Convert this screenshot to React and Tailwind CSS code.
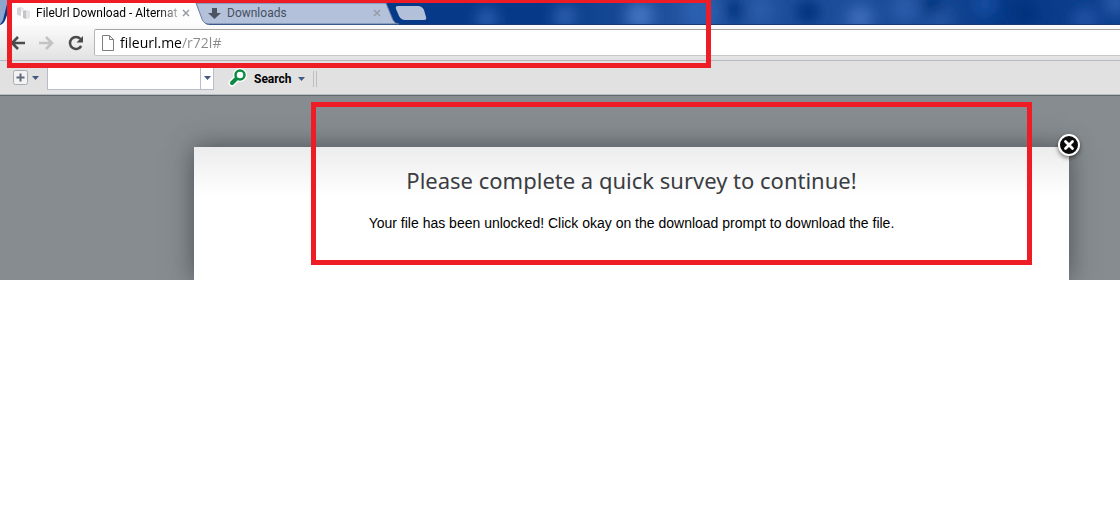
import React from "react";

function Caret({ className = "" }) {
  return (
    <svg width="7" height="4" viewBox="0 0 7 4" className={"shrink-0 " + className} aria-hidden="true">
      <path d="M0 0h7L3.500 4z" fill="#44597f" />
    </svg>
  );
}

function TabClose({ label }) {
  return (
    <button aria-label={label} className="flex size-3 shrink-0 items-center justify-center">
      <svg width="8" height="8" viewBox="0 0 8 8" aria-hidden="true">
        <path d="M1 1l6 6M7 1l-6 6" stroke="#989ca5" strokeWidth="1.500" />
      </svg>
    </button>
  );
}

function StripArt() {
  const glows = [
    [487, 19, 22, "#2a5cae"], [565, 17, 22, "#2d60b0"], [640, 16, 28, "#4273c0"],
    [700, 12, 40, "#2a5faf"], [760, 10, 28, "#2a5ca8"], [860, 18, 26, "#3c6cba"],
    [905, 8, 26, "#2c5cab"], [940, 20, 24, "#2454a2"], [985, 4, 22, "#1450a4"],
    [1085, 20, 24, "#2353a5"], [1116, 2, 24, "#2a5cab"],
  ];
  const shades = [[735, 10, 20], [808, 12, 24], [932, 4, 20], [1025, 14, 24]];
  return (
    <svg className="absolute inset-0 h-full w-full" preserveAspectRatio="none" viewBox="0 0 1120 25" aria-hidden="true">
      <defs>
        <linearGradient id="sky" x1="0" x2="1" y1="0" y2="0">
          <stop offset="0" stopColor="#06398a" />
          <stop offset="0.480" stopColor="#063a88" />
          <stop offset="0.600" stopColor="#1f519d" />
          <stop offset="0.820" stopColor="#1b4c98" />
          <stop offset="0.900" stopColor="#053786" />
          <stop offset="1" stopColor="#0f4190" />
        </linearGradient>
        <filter id="soft" filterUnits="userSpaceOnUse" x="0" y="-40" width="1160" height="110">
          <feGaussianBlur stdDeviation="7" />
        </filter>
      </defs>
      <rect width="1120" height="25" fill="url(#sky)" />
      <g filter="url(#soft)">
        {glows.map(([x, y, r, c]) => <circle key={x} cx={x} cy={y} r={r / 2} fill={c} />)}
        {shades.map(([x, y, r]) => <circle key={x} cx={x} cy={y} r={r / 2} fill="#04317b" />)}
      </g>
      <rect y="24" width="1120" height="1" fill="#1b3870" />
    </svg>
  );
}

function TabShapes() {
  return (
    <svg className="absolute top-0 left-0" width="430" height="25" viewBox="0 0 430 25" aria-hidden="true">
      <path d="M0 0H8L3 20Q1 24 0 24z" fill="#8ea6cd" />
      <path d="M196 3H386L393 20Q395 24 399 24H208Q204 24 202 20z" fill="#b3c1db" stroke="#5f789f" strokeWidth="1" />
      <path d="M0 25Q4 24 6 18L12 0H195L202 19Q204 24 209 25z" fill="#fdfdfd" />
      <path d="M196 3L202 19Q204 24 209 24.500" fill="none" stroke="#6f83a4" strokeWidth="1" />
      <path d="M398 6H418Q422 6 424 10L426 17Q427 20 424 20H405Q401 20 399 16L396 9Q395 6 398 6z" fill="#b2c0da" />
    </svg>
  );
}

function TabStrip() {
  return (
    <div className="relative h-[25px] overflow-hidden">
      <StripArt />
      <TabShapes />
      <div role="tablist" className="relative flex h-full items-center pt-px pl-4 font-[Roboto,sans-serif] text-xs">
        <div role="tab" aria-selected="true" className="flex w-[192px] items-center">
          <svg width="16" height="16" viewBox="0 0 16 16" className="mr-1 shrink-0" aria-hidden="true">
            <path d="M1 3l4-1v9l-4-1z" fill="#d5d5d8" />
            <path d="M5 2l3 1v3l-3 1z" fill="#ececee" />
            <path d="M7 6l3-1v9l-3-1z" fill="#c4c4c8" />
            <path d="M10 5l4 1v7l-4 1z" fill="#e5e5e8" />
          </svg>
          <span className="w-[144px] whitespace-nowrap bg-linear-to-r from-black from-85% to-black/20 bg-clip-text text-transparent">
            FileUrl Download - Alternat
          </span>
          <TabClose label="Close FileUrl Download" />
        </div>
        <div role="tab" aria-selected="false" className="flex w-[175px] items-center text-[#46505f]">
          <svg width="13" height="13" viewBox="0 0 13 13" className="mr-1.5 shrink-0" aria-hidden="true">
            <path d="M4 1h5v5h4L6.500 12 0 6h4z" fill="#4c5462" />
          </svg>
          <span className="grow">Downloads</span>
          <TabClose label="Close Downloads" />
        </div>
        <button aria-label="New tab" className="ml-3 h-4 w-7" />
      </div>
    </div>
  );
}

function NavBar() {
  return (
    <div className="flex h-9 items-center border-b border-[#b6b8c2] bg-linear-to-b from-[#fbfbfb] to-[#e2e2e2] pl-2.5">
      <button aria-label="Back" className="mr-3.5">
        <svg width="15" height="14" viewBox="0 0 15 14" fill="none" stroke="#4b4b4b" strokeWidth="2.600" aria-hidden="true">
          <path d="M15 7H2M8 1L2 7l6 6" />
        </svg>
      </button>
      <button aria-label="Forward" className="mr-3.5">
        <svg width="15" height="14" viewBox="0 0 15 14" fill="none" stroke="#c3c3c3" strokeWidth="2.600" aria-hidden="true">
          <path d="M0 7h13M7 1l6 6-6 6" />
        </svg>
      </button>
      <button aria-label="Reload" className="mr-2.5">
        <svg width="16" height="16" viewBox="0 0 16 16" aria-hidden="true">
          <path d="M13.200 11A6 6 0 1 1 12.500 4" fill="none" stroke="#4b4b4b" strokeWidth="2.500" />
          <path d="M15 1v6.500H8.500z" fill="#4b4b4b" />
        </svg>
      </button>
      <div className="flex h-[27px] grow items-center rounded-l-xs border border-r-0 border-t-[#a2a2a2] border-b-[#c8c8c8] border-l-[#b5b5b5] bg-white pl-[7px]">
        <svg width="12" height="16" viewBox="0 0 12 16" className="mr-1.5 shrink-0" fill="white" stroke="#7d7d7d" aria-hidden="true">
          <path d="M.500.500h7l4 4v11H.500zM7.500.500v4h4" />
        </svg>
        <label htmlFor="address" className="sr-only">Address</label>
        <input
          id="address"
          defaultValue="fileurl.me/r72l#"
          className="h-full min-w-0 grow bg-[linear-gradient(to_right,#000_62px,#8a8a8a_62px)] bg-clip-text text-sm text-transparent outline-none"
        />
      </div>
    </div>
  );
}

function SearchBar() {
  return (
    <div className="flex h-[35px] items-start border-b border-[#5f666c] bg-[#e1e1e1] pt-1.5 pl-3 shadow-[inset_0_-1px_0_#b6bec2]">
      <button aria-label="Add" className="mt-0.5 flex items-center gap-[3px]">
        <svg width="17" height="17" viewBox="0 0 17 17" aria-hidden="true">
          <rect x="1.500" y="1.500" width="14" height="14" rx="2" fill="#f3f3f3" stroke="#a9abb5" />
          <path d="M8.500 4.500v8M4.500 8.500h8" stroke="#5d6b7c" strokeWidth="2" />
        </svg>
        <Caret />
      </button>
      <label htmlFor="query" className="sr-only">Search text</label>
      <input id="query" className="ml-2 h-[23px] w-[154px] border border-t-0 border-[#b9bccd] bg-white px-1 text-xs outline-none" />
      <button aria-label="Search history" className="flex h-[23px] w-[13px] items-center justify-center border border-t-0 border-l-0 border-[#b9bccd] bg-white">
        <Caret />
      </button>
      <button className="ml-3.5 flex h-6 items-center font-[Roboto,sans-serif] text-xs font-bold text-black">
        <svg width="20" height="20" viewBox="0 0 20 20" className="mr-1.5 mb-0.5" aria-hidden="true">
          <g fill="none" strokeLinecap="round">
            <path d="M8 11L4 15" stroke="#fff" strokeWidth="7" />
            <circle cx="12" cy="7" r="4.500" stroke="#fff" strokeWidth="5" />
            <path d="M8 11L4 15" stroke="#0a8a42" strokeWidth="4" />
            <circle cx="12" cy="7" r="4.500" fill="#fff" stroke="#0a8a42" strokeWidth="2.500" />
          </g>
        </svg>
        Search
        <Caret className="ml-1.5" />
      </button>
      <div className="mt-1 ml-2 h-4 w-1 border-x border-[#bdbdc2]" />
    </div>
  );
}

export default function App() {
  return (
    <div className="relative min-h-screen bg-white font-['Open_Sans',sans-serif]">
      <TabStrip />
      <NavBar />
      <SearchBar />
      <main className="overflow-hidden bg-[#868c90] pt-[51px] pr-[51px] pl-[194px]">
        <section role="dialog" aria-labelledby="title" className="relative h-[133px] bg-linear-to-b from-[#ececec] to-white to-[50px] pt-[18px] text-center shadow-[0_0_24px_rgba(50,54,60,0.700)]">
          <h1 id="title" className="font-['Noto_Sans',sans-serif] text-[22px] leading-[30px] text-[#3a3d42]">
            Please complete a quick survey to continue!
          </h1>
          <p className="mt-[18px] font-['Liberation_Sans',sans-serif] text-sm text-black">
            Your file has been unlocked! Click okay on the download prompt to download the file.
          </p>
          <div className="pointer-events-none absolute top-[-45px] right-[37px] bottom-[15px] left-[117px] border-[5px] border-[#ee1c24]" />
          <button aria-label="Close" className="absolute -top-3.5 -right-3.5">
            <svg width="28" height="28" viewBox="0 0 28 28" aria-hidden="true" className="drop-shadow-[0_2px_2px_rgba(0,0,0,0.500)]">
              <circle cx="14" cy="12" r="10" fill="#0a0a0a" stroke="#fff" strokeWidth="2" />
              <path d="M10.500 8.500l7 7M17.500 8.500l-7 7" stroke="#fff" strokeWidth="2.800" strokeLinecap="round" />
            </svg>
          </button>
        </section>
      </main>
      <div className="pointer-events-none absolute top-0 left-[7px] h-[68px] w-[704px] border-5 border-t-3 border-[#ee1c24]" />
    </div>
  );
}
